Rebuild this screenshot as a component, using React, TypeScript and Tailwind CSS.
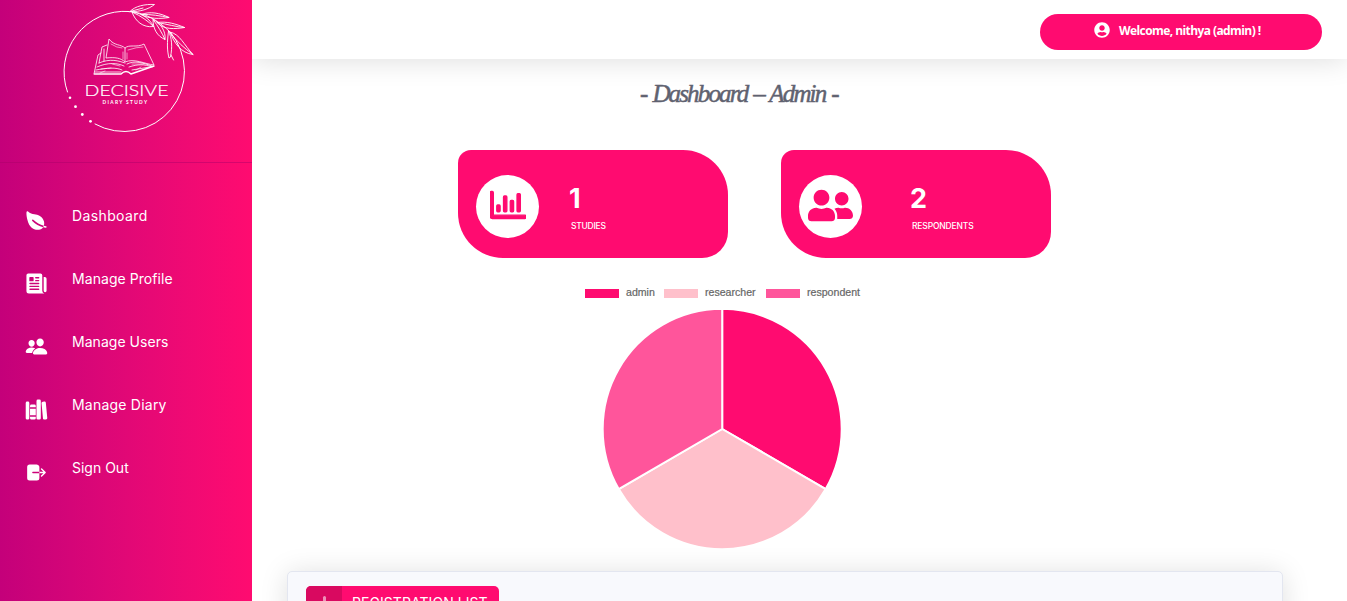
import React from "react";
import { IoLeaf, IoNewspaper, IoPeople, IoLibrary, IoLogOut } from "react-icons/io5";
import { FaRegChartBar, FaUserFriends, FaUserCircle } from "react-icons/fa";

const menu = [
  { label: "Dashboard", Icon: IoLeaf, tracking: "tracking-[0.38px]" },
  { label: "Manage Profile", Icon: IoNewspaper, tracking: "tracking-[0.06px]" },
  { label: "Manage Users", Icon: IoPeople, tracking: "tracking-[0.04px]" },
  { label: "Manage Diary", Icon: IoLibrary, tracking: "tracking-[0.22px]" },
  { label: "Sign Out", Icon: IoLogOut, tracking: "tracking-[0px]" },
];

function Logo() {
  return (
    <svg className="block h-[162px] w-[252px]" viewBox="0 0 252 162" fill="none" stroke="#fff" strokeLinecap="round" strokeLinejoin="round">
      <path strokeWidth="1" d="M67.5 92 A60.3 60.3 0 0 1 129 11.5 M170 32 A60.3 60.3 0 0 1 95 124" />
      <g fill="#fff" stroke="none">
        <circle cx="70" cy="97.8" r="1.3" />
        <circle cx="75.500" cy="106.700" r="1.4" />
        <circle cx="82.300" cy="114.500" r="1.4" />
        <circle cx="90.500" cy="121.300" r="1.4" />
      </g>
      <g strokeWidth="0.9">
        <path d="M128 11.5 C144 12 158 20 170 32" />
        <path d="M130 11.500 C135 6 145 4 154.500 4.500 C149 9 140 12 130 11.500 L143 8" />
        <path d="M132 12 C135 21 143 28 153.500 26.500 C150 19 142 13 132 12 C141 16 148 21 153.500 26.500" />
        <path d="M141 14.500 C150 11 160 13 169 17.500 C160 19 149 19 141 14.500 C151 14 160 16 169 17.500" />
        <path d="M153 19.500 C153 29 157 36 165 39.500 C166 32 161 23 153 19.500 C158 26 162 33 165 39.500" />
        <path d="M157 22.500 C167 21 176 24 184.500 27.500 C175 29 164 30 157 22.500 C167 24 176 27 184.500 27.500" />
        <path d="M168.500 31 C167 43 167 50 169 58 L170.500 57 C172.500 47 172 38 168.500 31 M171 55 L173.500 60" />
        <path d="M170 32 C180 34 184 45 193 54.500 C181 53 174 43 170 32 C176 41 184 48 193 54.500" />
      </g>
      <g strokeWidth="0.8">
        <path d="M125 48 C121 44 114 46 109 39 L106 58 C115 57 121 58 125 62 C134 58 145 64 154 65 L144 44 C137 48 129 44 125 48 V61" />
        <path d="M107 45 L102 47 L99 63 M101 53 L98 55 L94 74 M99 63 C110 58 119 61 125 63 M97 67 C108 62 118 63 124 66 M96 70 C107 68 116 67 122 70 M95 72 H121 M127 64 C135 60 143 63 152 66 M129 67 C138 64 144 64 152 67 M132 70 L150 67 M104 49 L104 61" />
        <path opacity="0.7" d="M111 44 Q117 48 122 48 M128 50 Q137 47 143 47 M112 64 L120 66 M101 69 L111 68 M132 64 H144 M127 53 V59 M123 52 V59 M100 73 L105 71 M136 70 L141 67" />
        <path strokeWidth="1.500" d="M94.500 74 H121 Q126 69 131 74 L154 66" />
      </g>
      <g fill="#fff" stroke="none" fontFamily="Lato, sans-serif">
        <text x="84.500" y="96.200" fontSize="16.500" fontWeight="300" stroke="#fff" strokeWidth="0.2" textLength="84" lengthAdjust="spacingAndGlyphs">DECISIVE</text>
        <text x="102.500" y="103.500" fontSize="4.800" fontWeight="700" textLength="44.500">DIARY STUDY</text>
      </g>
    </svg>
  );
}

function Stat({ icon, value, label, pad, labelTracking }: { icon: React.ReactNode; value: string; label: string; pad: string; labelTracking: string }) {
  return (
    <div className="flex h-[108px] w-[270px] items-center rounded-tl-[13px] rounded-tr-[45px] rounded-br-[26px] rounded-bl-[45px] bg-[#ff0b70] pt-[5px] pl-[18px] text-white">
      <div className="flex size-[63px] shrink-0 items-center justify-center rounded-full bg-white text-[#ff0b70]">{icon}</div>
      <div className={"flex flex-col " + pad}>
        <span className="-mt-px h-[35px] font-['Inter',sans-serif] text-[27px] leading-[35px] font-bold">{value}</span>
        <span className={"mt-[4px] ml-[2px] font-['Inter',sans-serif] text-[8.500px] leading-[12px] font-medium whitespace-nowrap " + labelTracking}>{label}</span>
      </div>
    </div>
  );
}

function Legend({ color, label, width }: { color: string; label: string; width: string }) {
  return (
    <div className="flex items-center">
      <span className={"mt-[2px] h-[9px] w-[34px] " + color} />
      <span className={"ml-[7px] text-[10.600px] leading-[12px] text-[#666] [-webkit-text-stroke:0.2px_#666] " + width}>{label}</span>
    </div>
  );
}

export default function App() {
  return (
    <div className="flex h-[601px] w-full overflow-hidden bg-white">
      <aside className="relative z-10 h-full w-[252px] shrink-0 bg-linear-to-r from-[#c4007a] to-[#ff0b70]">
        <Logo />
        <div className="h-px bg-[#a80068]/45" />
        <nav className="flex flex-col pt-[21px]">
          {menu.map(({ label, Icon, tracking }) => (
            <a key={label} className="flex h-[63px] items-center text-white">
              <Icon className="mt-[9px] ml-[25px] size-[23px]" />
              <span className={"ml-[24px] font-['Inter',sans-serif] text-[14px] leading-[20px] whitespace-nowrap " + tracking}>{label}</span>
            </a>
          ))}
        </nav>
      </aside>
      <main className="flex min-w-0 flex-1 flex-col">
        <header className="flex h-[59px] shrink-0 items-start justify-end bg-white pt-[14px] pr-[25px] shadow-[0_2px_28px_rgba(0,0,0,0.13)]">
          <button className="flex h-[36px] w-[282px] items-center rounded-full bg-[#ff0b70] pl-[54px] text-white">
            <FaUserCircle className="mb-[4px] size-[16px]" />
            <span className="mb-[2px] ml-[9px] font-['Open_Sans',sans-serif] text-[12px] font-bold tracking-[-0.58px] whitespace-nowrap">Welcome, nithya (admin) !</span>
          </button>
        </header>
        <h1 className="mt-[17px] ml-[388px] h-[36px] w-[220px] shrink-0 font-['Liberation_Serif',serif] text-[25px] leading-[36px] tracking-[-1.850px] [word-spacing:1.500px] whitespace-nowrap text-[#5f6270] italic [-webkit-text-stroke:0.5px_#5f6270]">- Dashboard – Admin -</h1>
        <section className="mt-[38px] ml-[206px] flex shrink-0 gap-[53px]">
          <Stat icon={<FaRegChartBar className="-mt-[3px] size-[36px]" stroke="currentColor" strokeWidth="18" />} value="1" label="STUDIES" pad="ml-[30px]" labelTracking="tracking-[-0.24px]" />
          <Stat icon={<FaUserFriends className="-mt-[3px] size-[45px]" />} value="2" label="RESPONDENTS" pad="ml-[48px]" labelTracking="tracking-[-0.15px]" />
        </section>
        <section className="mt-[27px] ml-[333px] w-[290px] shrink-0 font-['Liberation_Sans',sans-serif]">
          <div className="flex h-[14px] gap-[10px]">
            <Legend color="bg-[#ff0b70]" label="admin" width="w-[28px]" />
            <Legend color="bg-[#ffc0cb]" label="researcher" width="w-[51px]" />
            <Legend color="bg-[#ff559b]" label="respondent" width="w-[60px]" />
          </div>
          <svg className="mt-[8px] ml-[17px] block size-[242px]" viewBox="602 307.5 242 242" stroke="#fff" strokeWidth="2">
            <path fill="#ff0b70" d="M722.200 429.500 V309.300 A119.500 120.200 0 0 1 825.700 489.600 Z" />
            <path fill="#ffc0cb" d="M722.200 429.500 L825.700 489.600 A119.500 120.200 0 0 1 618.700 489.600 Z" />
            <path fill="#ff559b" d="M722.200 429.500 L618.700 489.600 A119.500 120.200 0 0 1 722.200 309.300 Z" />
          </svg>
        </section>
        <section className="mt-[22px] ml-[35px] h-[300px] w-[996px] shrink-0 rounded-[5px] border border-[#e3e6f0] bg-[#f8f9fd] pt-[14px] pl-[18px] shadow-[0_2px_28px_rgba(0,0,0,0.13)]">
          <button className="flex h-[38px] w-[193px] overflow-hidden rounded-[5px] bg-[#ff0b70] text-white">
            <span className="flex h-full w-[36px] justify-center bg-[#d90960] pt-[10px]"><span className="h-[16px] w-[3px] rounded bg-white/55" /></span>
            <span className="pt-[8px] pl-[10px] font-['Inter',sans-serif] text-[14px] leading-[18px] tracking-[0.05px] whitespace-nowrap">REGISTRATION LIST</span>
          </button>
        </section>
      </main>
    </div>
  );
}
